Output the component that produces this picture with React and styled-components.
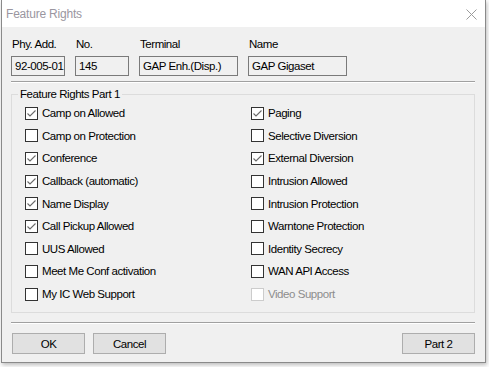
import React from "react";
import styled, { createGlobalStyle } from "styled-components";

const Global = createGlobalStyle`
  html, body { margin: 0; padding: 0; background: #ffffff; }
  body { width: 489px; height: 367px; overflow: hidden; }
  * { box-sizing: border-box; }
`;

const Desktop = styled.div`
  width: 489px;
  height: 367px;
  background: #fdfdfd;
  display: flex;
  align-items: flex-start;
  font-family: "Liberation Sans", Arial, sans-serif;
  font-size: 11.5px;
  letter-spacing: -0.45px;
  color: #000;
`;

const Window = styled.div`
  margin-left: 1px;
  width: 485px;
  height: 363px;
  border: 1px solid #8a8a8a;
  border-top: none;
  background: #f0f0f0;
  box-shadow: 1px 2px 4px rgba(0, 0, 0, 0.25);
  display: flex;
  flex-direction: column;
`;

const TitleBar = styled.div`
  height: 27px;
  background: #ffffff;
  display: flex;
  align-items: center;
  justify-content: space-between;
  padding: 1px 8px 0 4px;
`;

const Title = styled.span`
  font-size: 12px;
  color: #9a96a0;
  letter-spacing: -0.2px;
`;

const Body = styled.div`
  flex: 1;
  padding: 10px 10px 0 9px;
  display: flex;
  flex-direction: column;
`;

const InfoRow = styled.div`
  display: flex;
  gap: 10px;
`;

const InfoCol = styled.div`
  display: flex;
  flex-direction: column;
  gap: 5px;
  width: ${(p) => p.$w}px;
`;

const Label = styled.div`
  height: 14px;
  line-height: 14px;
  padding-left: 1px;
`;

const Field = styled.div`
  height: 20px;
  border: 1px solid #7a7a7a;
  background: #f0f0f0;
  line-height: 18px;
  padding-left: 3px;
  white-space: nowrap;
  overflow: hidden;
`;

const Separator = styled.div`
  border-top: 1px solid #a0a0a0;
  border-bottom: 1px solid #ffffff;
  margin-top: ${(p) => p.$mt}px;
`;

const Group = styled.fieldset`
  margin: 4px 0 0 0;
  padding: 1px 0 7px 13px;
  border: 1px solid #dcdcdc;
  min-width: 0;
`;

const Legend = styled.legend`
  margin-left: -7px;
  padding: 0 2px;
  line-height: 14px;
  height: 14px;
`;

const Grid = styled.div`
  display: grid;
  grid-template-columns: 226px 1fr;
  grid-auto-flow: column;
  grid-template-rows: repeat(9, 22.6px);
`;

const Item = styled.label`
  display: flex;
  align-items: center;
  gap: 4px;
  color: ${(p) => (p.$disabled ? "#8d8d8d" : "#000")};
  white-space: nowrap;
`;

const Box = styled.span`
  width: 13px;
  height: 13px;
  border: 1px solid ${(p) => (p.$disabled ? "#cccccc" : "#333333")};
  background: #ffffff;
  display: flex;
  align-items: center;
  justify-content: center;
  flex: none;
`;

const ButtonRow = styled.div`
  display: flex;
  gap: 8px;
  margin-top: 9px;
  padding-left: 1px;
`;

const Button = styled.button`
  width: 73px;
  height: 21px;
  border: 1px solid #adadad;
  background: #e1e1e1;
  font: inherit;
  letter-spacing: inherit;
  color: #000;
  padding: 0;
  margin-left: ${(p) => (p.$push ? "auto" : "0")};
`;

const Check = () => (
  <svg width="11" height="11" viewBox="0 0 11 11">
    <polyline points="1.5,5.5 4,8 9.5,2.5" fill="none" stroke="#6a6a6a" strokeWidth="1.1" />
  </svg>
);

const CloseIcon = () => (
  <svg width="11" height="11" viewBox="0 0 11 11">
    <path d="M0.5 0.5 L10.5 10.5 M10.5 0.5 L0.5 10.5" stroke="#9b9b9b" strokeWidth="1" fill="none" />
  </svg>
);

const left = [
  ["Camp on Allowed", true],
  ["Camp on Protection", false],
  ["Conference", true],
  ["Callback (automatic)", true],
  ["Name Display", true],
  ["Call Pickup Allowed", true],
  ["UUS Allowed", false],
  ["Meet Me Conf activation", false],
  ["My IC Web Support", false],
];

const right = [
  ["Paging", true],
  ["Selective Diversion", false],
  ["External Diversion", true],
  ["Intrusion Allowed", false],
  ["Intrusion Protection", false],
  ["Warntone Protection", false],
  ["Identity Secrecy", false],
  ["WAN API Access", false],
  ["Video Support", false, true],
];

const info = [
  ["Phy. Add.", "92-005-01", 54],
  ["No.", "145", 54],
  ["Terminal", "GAP Enh.(Disp.)", 99],
  ["Name", "GAP Gigaset", 99],
];

export default function App() {
  return (
    <>
      <Global />
      <Desktop>
        <Window>
          <TitleBar>
            <Title>Feature Rights</Title>
            <CloseIcon />
          </TitleBar>
          <Body>
            <InfoRow>
              {info.map(([l, v, w]) => (
                <InfoCol key={l} $w={w}>
                  <Label>{l}</Label>
                  <Field>{v}</Field>
                </InfoCol>
              ))}
            </InfoRow>
            <Separator $mt={5} />
            <Group>
              <Legend>Feature Rights Part 1</Legend>
              <Grid>
                {[...left, ...right].map(([t, c, d]) => (
                  <Item key={t} $disabled={d}>
                    <Box $disabled={d}>{c && <Check />}</Box>
                    {t}
                  </Item>
                ))}
              </Grid>
            </Group>
            <Separator $mt={9} />
            <ButtonRow>
              <Button>OK</Button>
              <Button>Cancel</Button>
              <Button $push>Part 2</Button>
            </ButtonRow>
          </Body>
        </Window>
      </Desktop>
    </>
  );
}
